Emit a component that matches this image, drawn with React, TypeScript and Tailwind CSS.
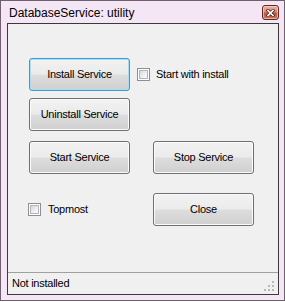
import React from "react";

const font = { fontFamily: '"Liberation Sans", Arial, sans-serif' };

function Btn({ label, primary = false }: { label: string; primary?: boolean }) {
  return (
    <div
      className={
        "w-[101px] h-[33px] rounded-[3px] border flex items-center justify-center text-[11px] tracking-[-0.25px] text-black bg-[linear-gradient(to_bottom,#f2f2f2_0%,#ebebeb_48%,#dddddd_52%,#cfcfcf_100%)] " +
        (primary
          ? "border-[#3c9bd6] shadow-[inset_0_0_0_1px_#a6e0f6]"
          : "border-[#707070] shadow-[inset_0_0_0_1px_#fbfbfb]")
      }
    >
      {label}
    </div>
  );
}

function Check() {
  return (
    <div className="w-[13px] h-[13px] border border-[#8e8f8f] bg-white flex items-center justify-center shrink-0">
      <div className="w-[9px] h-[9px] border border-[#b2b6bc] bg-[linear-gradient(135deg,#d5d8dd_0%,#eef0f2_60%,#fafafa_100%)]" />
    </div>
  );
}

export default function App() {
  return (
    <div className="w-[285px] h-[302px] bg-white" style={font}>
      <div className="w-[285px] h-[301px] border border-[#6f5f6f] bg-[#f4e6f4] flex flex-col pl-[6px] pr-[5px] pb-[5px]">
        <div className="h-[22px] flex items-start justify-between">
          <div className="ml-[2px] mt-[4px] text-[12px] leading-[16px] text-black">DatabaseService: utility</div>
          <div className="mt-[4px] w-[17px] h-[15px] rounded-[3px] border border-[#5a2a24] bg-[linear-gradient(to_bottom,#eeb2a4_0%,#dc8a76_45%,#c8523a_55%,#d2755d_100%)] shadow-[inset_0_0_0_1px_rgba(255,220,210,0.6)] flex items-center justify-center">
            <svg width="9" height="8" viewBox="0 0 9 8">
              <path d="M2 1.5 L7 6.5 M7 1.5 L2 6.5" stroke="#4a2a2a" strokeWidth="3.2" strokeLinecap="square" />
              <path d="M2 1.5 L7 6.5 M7 1.5 L2 6.5" stroke="#ffffff" strokeWidth="1.6" strokeLinecap="square" />
            </svg>
          </div>
        </div>
        <div className="h-[272px] border border-[#3a3a3a] bg-[#f0f0f0] flex flex-col">
          <div className="h-[248px] pl-[21px] pt-[34px] flex flex-col">
            <div className="flex items-center">
              <Btn label="Install Service" primary />
              <div className="ml-[7px]">
                <Check />
              </div>
              <span className="ml-[6px] text-[11px] tracking-[-0.25px] text-black">Start with install</span>
            </div>
            <div className="mt-[7px] flex">
              <Btn label="Uninstall Service" />
            </div>
            <div className="mt-[10px] flex gap-[23px]">
              <Btn label="Start Service" />
              <Btn label="Stop Service" />
            </div>
            <div className="mt-[19px] flex items-center">
              <div className="w-[124px] flex items-center -ml-[1px]">
                <Check />
                <span className="ml-[7px] text-[11px] tracking-[-0.25px] text-black">Topmost</span>
              </div>
              <div className="ml-[1px]">
                <Btn label="Close" />
              </div>
            </div>
          </div>
          <div className="h-[22px] border-t border-[#a0a0a0] flex items-center justify-between pl-[4px] pr-[3px]">
            <span className="text-[11px] tracking-[-0.25px] text-black">Not installed</span>
            <svg width="11" height="11" viewBox="0 0 11 11" className="mt-[6px]">
              <rect x="8" y="0" width="2" height="2" fill="#b8b8b8" />
              <rect x="4" y="4" width="2" height="2" fill="#b8b8b8" />
              <rect x="8" y="4" width="2" height="2" fill="#b8b8b8" />
              <rect x="0" y="8" width="2" height="2" fill="#b8b8b8" />
              <rect x="4" y="8" width="2" height="2" fill="#b8b8b8" />
              <rect x="8" y="8" width="2" height="2" fill="#b8b8b8" />
            </svg>
          </div>
        </div>
      </div>
    </div>
  );
}
